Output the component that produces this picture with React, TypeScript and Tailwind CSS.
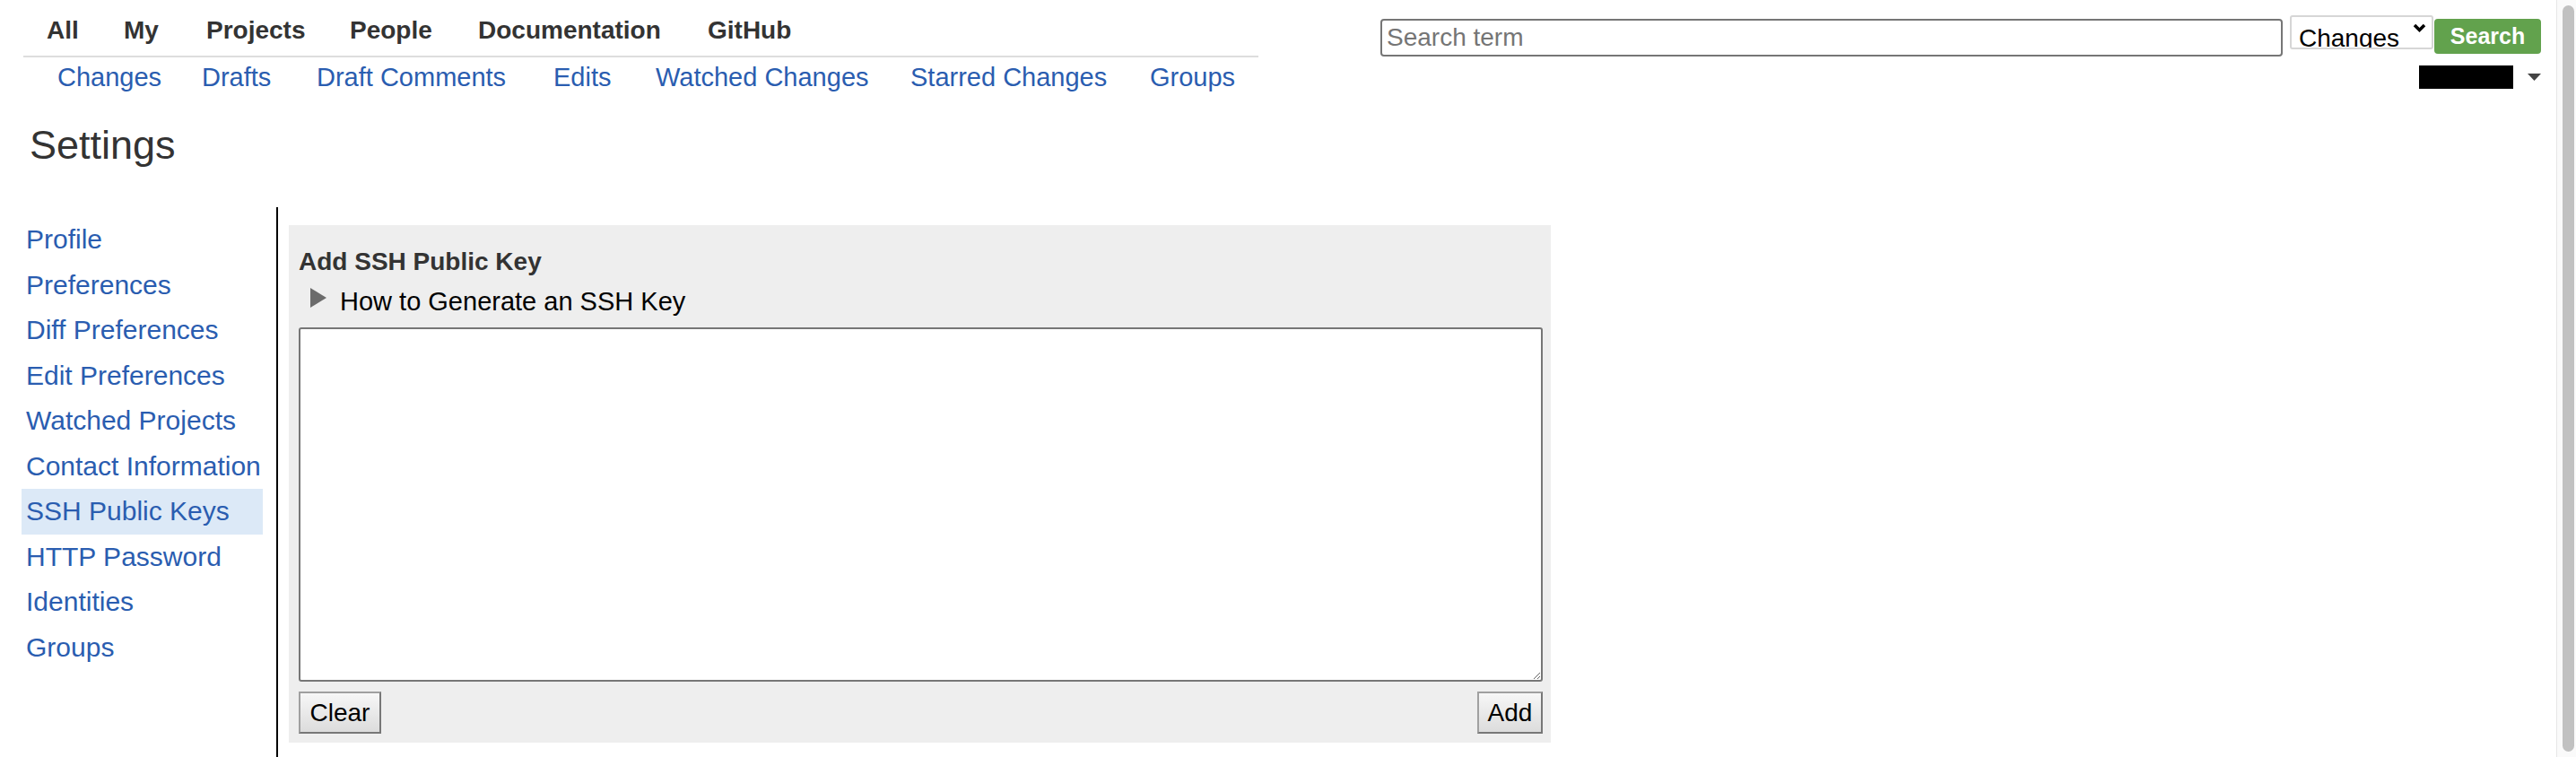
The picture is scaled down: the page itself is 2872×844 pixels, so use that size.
import { useState } from "react";

const mainLinks = [
  { label: "All", width: "w-[86px]" },
  { label: "My", width: "w-[92px]" },
  { label: "Projects", width: "w-[160px]" },
  { label: "People", width: "w-[143px]" },
  { label: "Documentation", width: "w-[256px]" },
  { label: "GitHub", width: "" },
];

const subLinks = [
  { label: "Changes", width: "w-[161px]" },
  { label: "Drafts", width: "w-[128px]" },
  { label: "Draft Comments", width: "w-[264px]" },
  { label: "Edits", width: "w-[114px]" },
  { label: "Watched Changes", width: "w-[284px]" },
  { label: "Starred Changes", width: "w-[267px]" },
  { label: "Groups", width: "" },
];

const settingsLinks = [
  "Profile",
  "Preferences",
  "Diff Preferences",
  "Edit Preferences",
  "Watched Projects",
  "Contact Information",
  "SSH Public Keys",
  "HTTP Password",
  "Identities",
  "Groups",
];

function App() {
  const [sshKey, setSshKey] = useState("");
  const active = "SSH Public Keys";

  return (
    <div className="flex min-h-screen w-full bg-white font-['Liberation_Sans',Arial,sans-serif] text-[#333333]">
      <div className="flex min-w-0 flex-1 flex-col">
        {/* Header */}
        <header className="flex justify-between pr-[17px]">
          <div className="ml-[26px] w-[1377px] pt-[18px]">
            <nav className="flex h-[32px] pl-[26px] text-[28px] font-bold leading-[32px] text-[#333333]">
              {mainLinks.map((link) => (
                <a key={link.label} href="#" className={`shrink-0 ${link.width}`}>
                  {link.label}
                </a>
              ))}
            </nav>
            <div className="mt-[12px] h-[2px] bg-[#dddddd]" />
            <nav className="mt-[6px] flex h-[32px] pl-[38px] text-[29px] leading-[32px] text-[#2a5db0]">
              {subLinks.map((link) => (
                <a key={link.label} href="#" className={`shrink-0 ${link.width}`}>
                  {link.label}
                </a>
              ))}
            </nav>
          </div>

          <div className="flex flex-col items-end pt-[17px]">
            <div className="flex items-start">
              <input
                placeholder="Search term"
                className="mt-[4px] h-[42px] w-[1006px] rounded-[4px] border-2 border-[#767676] bg-white px-[5px] text-[28px] text-black outline-none placeholder:text-[#757575]"
              />
              <div className="ml-[8px] flex h-[38px] w-[160px] overflow-hidden rounded-[3px] border-2 border-[#d6d6d6] bg-white">
                <span className="pl-[8px] pt-[8px] text-[28px] leading-[32px] text-black">Changes</span>
                <svg width="15" height="10" viewBox="0 0 15 10" className="ml-[15px] mt-[7px] shrink-0">
                  <polyline points="2,2 7.5,7.5 13,2" fill="none" stroke="#000" strokeWidth="3.5" />
                </svg>
              </div>
              <button className="ml-[1px] mt-[4px] h-[39px] w-[119px] rounded-[4px] bg-[#62a24d] text-[25px] font-bold leading-[39px] text-white">
                Search
              </button>
            </div>
            <div className="mt-[10px] flex items-center">
              <div className="h-[26px] w-[105px] bg-black" />
              <svg width="15" height="8" viewBox="0 0 15 8" className="ml-[16px]">
                <polygon points="0,0 15,0 7.5,8" fill="#444444" />
              </svg>
            </div>
          </div>
        </header>

        <h1 className="ml-[33px] mt-[36px] h-[48px] text-[45px] font-normal leading-[48px] text-[#333333]">Settings</h1>

        {/* Body */}
        <div className="mt-[45px] flex flex-1 pl-[24px]">
          <aside className="w-[269px] shrink-0 pt-[11px]">
            {settingsLinks.map((label) => (
              <a
                key={label}
                href="#"
                className={`block h-[50.5px] pl-[5px] text-[30px] leading-[50px] text-[#2a5db0] ${
                  label === active ? "bg-[#dce9f7]" : ""
                }`}
              >
                {label}
              </a>
            ))}
          </aside>

          <div className="ml-[15px] w-[2px] shrink-0 bg-black" />

          <section className="ml-[12px] mt-[20px] w-[1407px] self-start bg-[#eeeeee] pb-[10px] pl-[11px] pr-[9px] pt-[25px]">
            <h2 className="text-[28px] font-bold leading-[32px] text-[#333333]">Add SSH Public Key</h2>
            <div className="mt-[12px] flex h-[32px] items-start text-[29px] leading-[32px] text-black">
              <svg width="18" height="22" viewBox="0 0 18 22" className="ml-[13px] mt-[1px] shrink-0">
                <polygon points="0,0 18,11 0,22" fill="#6b6b6b" />
              </svg>
              <span className="ml-[15px]">How to Generate an SSH Key</span>
            </div>
            <textarea
              value={sshKey}
              onChange={(e) => setSshKey(e.target.value)}
              className="mt-[13px] block h-[395px] w-[1387px] rounded-[3px] border-2 border-[#767676] bg-white p-[4px] text-[24px] outline-none"
            />
            <div className="mt-[11px] flex justify-between">
              <button
                onClick={() => setSshKey("")}
                className="h-[47px] w-[92px] border-2 border-[#a0a0a0] border-b-[#777777] border-r-[#777777] bg-gradient-to-b from-[#f7f7f7] to-[#dcdcdc] text-[28px] leading-[43px] text-black"
              >
                Clear
              </button>
              <button className="h-[47px] w-[73px] border-2 border-[#a0a0a0] border-b-[#777777] border-r-[#777777] bg-gradient-to-b from-[#f7f7f7] to-[#dcdcdc] text-[28px] leading-[43px] text-black">
                Add
              </button>
            </div>
          </section>
        </div>
      </div>

      {/* Scrollbar */}
      <div className="flex w-[22px] shrink-0 border-l border-[#e6e6e6] bg-[#fafafa] py-[6px] pl-[6px] pr-[2px]">
        <div className="flex-1 rounded-full bg-[#c1c1c1]" />
      </div>
    </div>
  );
}

export default App;
